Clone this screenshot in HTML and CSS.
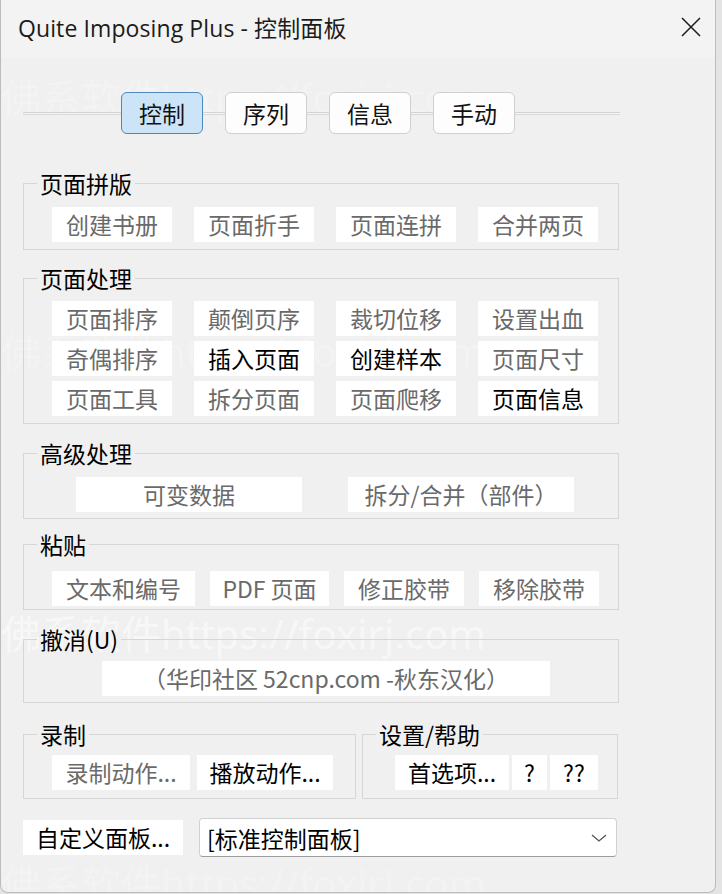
FILE: index.html
```html
<!DOCTYPE html>
<html lang="zh-CN">
<head>
    <meta charset="UTF-8">
    <meta name="viewport" content="width=device-width, initial-scale=1.0">
    <title>Quite Imposing Plus - 控制面板</title>
    <link rel="stylesheet" href="styles.css">
</head>
<body>
    <div class="window">
        <div class="titlebar">
            <span class="title">Quite Imposing Plus - 控制面板</span>
            <svg class="close" width="22" height="22" viewBox="0 0 22 22">
                <path d="M2 2L20 20M20 2L2 20" stroke="#1a1a1a" stroke-width="1.5" fill="none"/>
            </svg>
        </div>

        <!-- faint watermark lines, behind the controls -->
        <div class="wm wm1">佛系软件https://foxirj.com</div>
        <div class="wm wm2">佛系软件https://foxirj.com</div>
        <div class="wm wm3">佛系软件https://foxirj.com</div>
        <div class="wm wm4">佛系软件https://foxirj.com</div>

        <div class="content">
            <div class="tabs">
                <button class="tab active">控制</button>
                <button class="tab">序列</button>
                <button class="tab">信息</button>
                <button class="tab">手动</button>
            </div>

            <fieldset class="group g-layout">
                <legend>页面拼版</legend>
                <div class="grid4">
                    <button class="btn">创建书册</button>
                    <button class="btn">页面折手</button>
                    <button class="btn">页面连拼</button>
                    <button class="btn">合并两页</button>
                </div>
            </fieldset>

            <fieldset class="group g-pages">
                <legend>页面处理</legend>
                <div class="grid4 rows">
                    <button class="btn">页面排序</button>
                    <button class="btn">颠倒页序</button>
                    <button class="btn">裁切位移</button>
                    <button class="btn">设置出血</button>
                    <button class="btn">奇偶排序</button>
                    <button class="btn on">插入页面</button>
                    <button class="btn on">创建样本</button>
                    <button class="btn">页面尺寸</button>
                    <button class="btn">页面工具</button>
                    <button class="btn">拆分页面</button>
                    <button class="btn">页面爬移</button>
                    <button class="btn on">页面信息</button>
                </div>
            </fieldset>

            <fieldset class="group g-advanced">
                <legend>高级处理</legend>
                <div class="grid2">
                    <button class="btn">可变数据</button>
                    <button class="btn">拆分/合并（部件）</button>
                </div>
            </fieldset>

            <fieldset class="group g-paste">
                <legend>粘贴</legend>
                <div class="paste-row">
                    <button class="btn w143">文本和编号</button>
                    <button class="btn w119">PDF 页面</button>
                    <button class="btn w120">修正胶带</button>
                    <button class="btn w120">移除胶带</button>
                </div>
            </fieldset>

            <fieldset class="group g-undo">
                <legend>撤消(U)</legend>
                <button class="btn undo">（华印社区 52cnp.com -秋东汉化）</button>
            </fieldset>

            <div class="split">
                <fieldset class="group g-record">
                    <legend>录制</legend>
                    <div class="record-row">
                        <button class="btn w138">录制动作...</button>
                        <button class="btn on w136">播放动作...</button>
                    </div>
                </fieldset>
                <fieldset class="group g-help">
                    <legend>设置/帮助</legend>
                    <div class="help-row">
                        <button class="btn on w114">首选项...</button>
                        <button class="btn on w35">?</button>
                        <button class="btn on w48">??</button>
                    </div>
                </fieldset>
            </div>

            <div class="bottom">
                <button class="btn on custom">自定义面板...</button>
                <div class="combo">
                    <span>[标准控制面板]</span>
                    <svg width="18" height="10" viewBox="0 0 18 10">
                        <path d="M2 2L9 8L16 2" stroke="#555" stroke-width="1.3" fill="none"/>
                    </svg>
                </div>
            </div>
        </div>
    </div>
</body>
</html>
```

FILE: styles.css
```css
* {
    box-sizing: border-box;
}

body {
    margin: 0;
    background: #e4e4e4;
    font-family: "Noto Sans CJK SC", sans-serif;
}

.window {
    position: relative;
    width: 716px;
    height: 893px;
    background: #f0f0f0;
    border: 1px solid #bcbcbc;
    border-top: none;
    border-radius: 0 0 8px 8px;
    overflow: hidden;
}

.titlebar {
    height: 58px;
    display: flex;
    align-items: center;
    justify-content: space-between;
    padding: 0 13px 5px 17px;
    background: #f3f3f3;
}

.title {
    font-family: "Open Sans", "Noto Sans CJK SC", sans-serif;
    font-size: 23px;
    letter-spacing: 0.1px;
    color: #1b1b1b;
}

.content {
    position: relative;
    padding: 34px 0 0 22px;
}

/* tab strip */
.tabs {
    display: flex;
    align-items: center;
    gap: 22px;
    width: 597px;
    height: 42px;
    padding-left: 98px;
    background: linear-gradient(to bottom, #d2d2d2 0, #d2d2d2 1px, #f7f7f7 1px, #f7f7f7 2px, #d8d8d8 2px, #d8d8d8 3px) center / 100% 3px no-repeat;
}

.tab {
    width: 82px;
    height: 42px;
    padding: 0;
    border: 1px solid #cfcfcf;
    border-radius: 6px;
    background: #fdfdfd;
    font-family: inherit;
    font-size: 23px;
    color: #111;
}

.tab.active {
    background: #cce4f7;
    border-color: #4f87bf;
}

/* group boxes */
.group {
    width: 596px;
    min-width: 0;
    margin: 16px 0 0;
    padding: 0 0 7px;
    border: 1px solid #d6d6d6;
}

.group legend {
    margin-left: 13px;
    padding: 0 3px;
    height: 25px;
    font-size: 23px;
    line-height: 25px;
    color: #000;
}

.g-layout {
    margin-top: 37px;
}

.g-layout .grid4 {
    margin-top: 11px;
}

.g-pages .grid4 {
    margin-top: 10px;
}

.g-advanced {
    margin-top: 17px;
    padding-bottom: 6px;
}

.g-paste {
    margin-top: 13px;
    padding-bottom: 3px;
}

.g-undo {
    margin-top: 17px;
    padding-bottom: 6px;
}

.btn {
    height: 35px;
    padding: 0;
    border: none;
    background: #fff;
    font-family: inherit;
    font-size: 23px;
    line-height: 35px;
    color: #6a6a6a;
    white-space: nowrap;
}

.btn.on {
    color: #000;
}

.grid4 {
    display: grid;
    grid-template-columns: repeat(4, 120px);
    column-gap: 22px;
    margin-left: 28px;
}

.grid4.rows {
    row-gap: 5px;
}

.grid2 {
    display: grid;
    grid-template-columns: repeat(2, 226px);
    column-gap: 46px;
    margin: 11px 0 0 52px;
}

.paste-row {
    display: flex;
    gap: 15px;
    margin: 14px 0 0 28px;
}

.w143 { width: 143px; }
.w119 { width: 119px; }
.w120 { width: 120px; }
.w138 { width: 138px; }
.w136 { width: 136px; }
.w114 { width: 114px; }
.w35 { width: 35px; }
.w48 { width: 48px; }

.undo {
    display: block;
    width: 448px;
    margin: 9px 0 0 78px;
}

/* record + settings side by side */
.split {
    display: flex;
    gap: 6px;
    margin-top: 19px;
}

.split .group {
    margin-top: 0;
    padding-bottom: 8px;
}

.g-record {
    width: 333px;
}

.g-help {
    width: 256px;
}

.record-row {
    display: flex;
    gap: 7px;
    margin: 8px 0 0 28px;
}

.help-row {
    display: flex;
    gap: 3px;
    margin: 8px 0 0 32px;
}

.bottom {
    display: flex;
    align-items: center;
    gap: 16px;
    margin-top: 19px;
}

.custom {
    width: 160px;
}

.combo {
    width: 418px;
    height: 39px;
    display: flex;
    align-items: center;
    justify-content: space-between;
    padding: 0 8px 0 7px;
    background: #fff;
    border: 1px solid #d0d0d0;
    border-bottom-color: #9c9c9c;
    border-radius: 4px;
    font-size: 23px;
    color: #000;
}

/* watermark */
.wm {
    position: absolute;
    left: 0;
    font-family: "Noto Sans", "Noto Sans CJK SC", sans-serif;
    font-size: 40px;
    line-height: 44px;
    color: rgba(255, 255, 255, 0.22);
    white-space: nowrap;
    pointer-events: none;
}

.wm1 { top: 76px; }
.wm2 { top: 330px; }
.wm3 { top: 612px; color: rgba(255, 255, 255, 0.5); }
.wm4 { top: 862px; }
```
